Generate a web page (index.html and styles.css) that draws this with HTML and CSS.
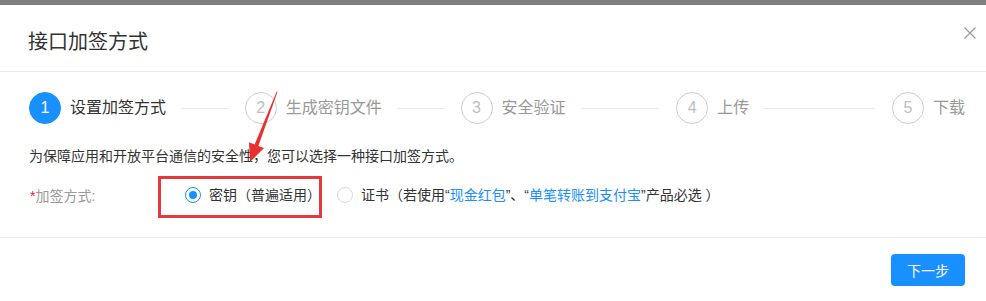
FILE: index.html
```html
<!DOCTYPE html>
<html lang="zh-CN">
<head>
<meta charset="utf-8">
<title>接口加签方式</title>
<link rel="stylesheet" href="styles.css">
</head>
<body>
<div class="dialog">
  <div class="dialog-header">
    <span class="dialog-title">接口加签方式</span>
    <svg class="close" width="12" height="12" viewBox="0 0 12 12"><path d="M0.5 0.5 L11.5 11.5 M11.5 0.5 L0.5 11.5" stroke="#9a9a9a" stroke-width="1.2" fill="none"/></svg>
  </div>
  <div class="dialog-body">
    <div class="steps">
      <div class="step active"><span class="step-icon">1</span><span class="step-title">设置加签方式</span><span class="step-line"></span></div>
      <div class="step"><span class="step-icon">2</span><span class="step-title">生成密钥文件</span><span class="step-line"></span></div>
      <div class="step"><span class="step-icon">3</span><span class="step-title">安全验证</span><span class="step-line"></span></div>
      <div class="step"><span class="step-icon">4</span><span class="step-title">上传</span><span class="step-line"></span></div>
      <div class="step last"><span class="step-icon">5</span><span class="step-title">下载</span></div>
    </div>
    <p class="desc">为保障应用和开放平台通信的安全性，您可以选择一种接口加签方式。</p>
    <div class="form-row">
      <label class="form-label"><span class="req">*</span>加签方式:</label>
      <div class="radio-group">
        <label class="radio checked"><span class="radio-inner"></span><span class="radio-text">密钥（普遍适用）</span></label>
        <label class="radio"><span class="radio-inner"></span><span class="radio-text">证书（若使用“<span class="link">现金红包</span>”、“<span class="link">单笔转账到支付宝</span>”产品必选 ）</span></label>
      </div>
    </div>
  </div>
  <div class="dialog-footer">
    <button class="btn-primary">下一步</button>
  </div>
</div>
<div class="mark-box"></div>
<svg class="mark-arrow" width="986" height="301" viewBox="0 0 986 301"><polygon points="277.6,91.6 276.6,91.8 254.6,144.5 249,142.3 250,162 264,148.1 258.4,145.9" fill="#e8302f"/></svg>
</body>
</html>
```

FILE: styles.css
```css
* { box-sizing: border-box; }
html, body { margin: 0; padding: 0; }
body {
  width: 986px;
  height: 301px;
  overflow: hidden;
  background: #808080;
  font-family: "Liberation Sans", "Noto Sans CJK SC", sans-serif;
  color: #333;
  position: relative;
}
.dialog {
  margin-top: 5px;
  background: #fff;
  height: 296px;
  display: flex;
  flex-direction: column;
}
.dialog-header {
  height: 67px;
  flex: none;
  border-bottom: 1px solid #e9e9e9;
  display: flex;
  align-items: flex-start;
  justify-content: space-between;
  padding: 23px 10px 0 28px;
}
.dialog-title {
  font-size: 20px;
  line-height: 28px;
  color: #333;
}
.close { display: block; margin-top: -1px; }
.dialog-body {
  flex: none;
  padding: 20px 21px 0 29px;
  height: 166px;
  border-bottom: 1px solid #ececec;
}
.steps {
  display: flex;
  align-items: center;
  height: 32px;
}
.step {
  flex: 1;
  display: flex;
  align-items: center;
}
.step.last { flex: none; }
.step-icon {
  width: 32px;
  height: 32px;
  border-radius: 50%;
  border: 1px solid #cfcfcf;
  color: #bdbdbd;
  font-size: 16px;
  display: flex;
  align-items: center;
  justify-content: center;
  flex: none;
}
.step.active .step-icon {
  background: #1890ff;
  border-color: #1890ff;
  color: #fff;
}
.step-title {
  margin-left: 9px;
  font-size: 16px;
  line-height: 24px;
  color: #999;
  white-space: nowrap;
}
.step.active .step-title { color: #333; }
.step-line {
  flex: 1;
  height: 1px;
  background: #e8e8e8;
  margin: 0 17px 0 15px;
}
.desc {
  margin: 21px 0 0;
  font-size: 14px;
  line-height: 22px;
  color: #333;
}
.form-row {
  display: flex;
  align-items: center;
  height: 32px;
  margin-top: 12px;
}
.form-label {
  width: 156px;
  font-size: 14px;
  color: #999;
  padding-left: 1px;
}
.req { color: #f5222d; }
.radio-group { display: flex; align-items: center; }
.radio {
  display: flex;
  align-items: center;
  margin-right: 8px;
  font-size: 14px;
  line-height: 22px;
}
.radio-inner {
  width: 16px;
  height: 16px;
  border-radius: 50%;
  border: 1px solid #d9d9d9;
  position: relative;
  flex: none;
}
.radio.checked .radio-inner { border-color: #1890ff; }
.radio.checked .radio-inner::after {
  content: "";
  position: absolute;
  left: 3px;
  top: 3px;
  width: 8px;
  height: 8px;
  border-radius: 50%;
  background: #1890ff;
}
.radio-text { padding: 0 8px; color: #333; white-space: nowrap; }
.link { color: #1890ff; }
.dialog-footer {
  display: flex;
  justify-content: flex-end;
  padding: 16px 21px 0 0;
}
.btn-primary {
  height: 32px;
  padding: 0 16px;
  border: 0;
  border-radius: 4px;
  background: #1890ff;
  color: #fff;
  font-family: "Liberation Sans", "Noto Sans CJK SC", sans-serif;
  font-size: 14px;
}
.mark-box {
  position: absolute;
  left: 158px;
  top: 176px;
  width: 164px;
  height: 42px;
  border: 3px solid #e5393b;
}
.mark-arrow {
  position: absolute;
  left: 0;
  top: 0;
  pointer-events: none;
}
```
